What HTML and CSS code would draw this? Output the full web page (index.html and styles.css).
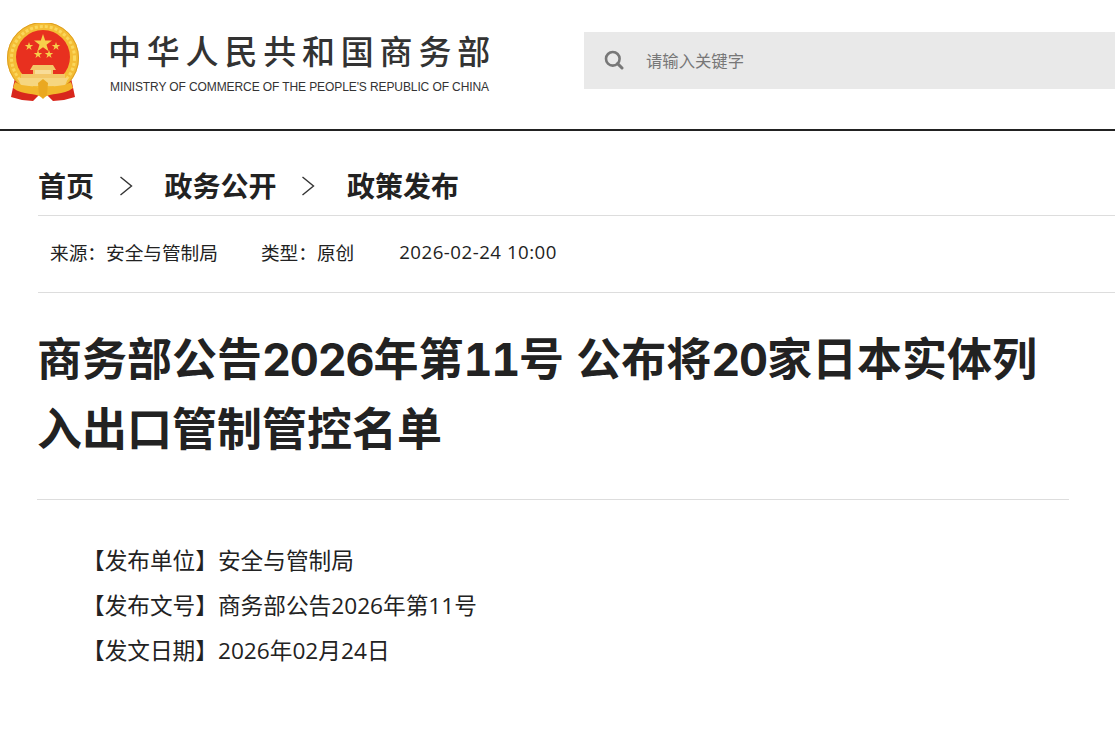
FILE: index.html
```html
<!DOCTYPE html>
<html lang="zh-CN">
<head>
  <meta charset="UTF-8" />
  <meta name="viewport" content="width=device-width, initial-scale=1.0"/>
  <title>商务部公告2026年第11号</title>
  <link rel="stylesheet" href="styles.css">
</head>
<body>
  <header class="top">
    <div class="brand">
      <svg class="emblem" width="76" height="80" viewBox="0 0 76 80">
        <path d="M11 50 L6 74 L17 77 L28 78 L34 72 L42 72 L48 78 L59 77 L70 74 L65 50 Z" fill="#d8261c"/>
        <circle cx="38" cy="35" r="36" fill="#f4bd35"/>
        <circle cx="38" cy="35" r="31.5" fill="none" stroke="#fbd75c" stroke-width="3" stroke-dasharray="3 2"/>
        <circle cx="38" cy="35" r="35.5" fill="none" stroke="#dd9d20" stroke-width="1"/>
        <circle cx="38" cy="34" r="27" fill="#e8301f"/>
        <polygon points="38,11 40.2,17.6 47,17.6 41.5,21.7 43.6,28.3 38,24.2 32.4,28.3 34.5,21.7 29,17.6 35.8,17.6" fill="#f7cf4a"/>
        <polygon points="24,19 25,22 28.2,22 25.6,23.9 26.6,27 24,25.1 21.4,27 22.4,23.9 19.8,22 23,22" fill="#f7cf4a"/>
        <polygon points="51,19 52,22 55.2,22 52.6,23.9 53.6,27 51,25.1 48.4,27 49.4,23.9 46.8,22 50,22" fill="#f7cf4a"/>
        <polygon points="33,27 34,30 37.2,30 34.6,31.9 35.6,35 33,33.1 30.4,35 31.4,31.9 28.8,30 32,30" fill="#f7cf4a"/>
        <polygon points="44,27 45,30 48.2,30 45.6,31.9 46.6,35 44,33.1 41.4,35 42.4,31.9 39.8,30 43,30" fill="#f7cf4a"/>
        <path d="M28 42 H48 L51 47 H48 V51 H60 V55 H16 V51 H28 V47 H25 Z" fill="#f3c768"/>
        <path d="M30 47 H46 V51 H30 Z" fill="#f8dc98"/>
        <path d="M13 55 H63 L60 63 H16 Z" fill="#f6d680"/>
        <path d="M10 59 C18 65 30 61 38 67 C46 61 58 65 66 59 L68 65 C58 73 46 69 38 75 C30 69 18 73 8 65 Z" fill="#f2b62c"/>
        <path d="M33 60 L38 56 L43 60 L42 72 L38 76 L34 72 Z" fill="#eaa821"/>
      </svg>
      <div class="brand-text">
        <div class="brand-cn">中华人民共和国商务部</div>
        <div class="brand-en">MINISTRY OF COMMERCE OF THE PEOPLE'S REPUBLIC OF CHINA</div>
      </div>
    </div>
    <div class="search">
      <svg class="search-icon" width="20" height="20" viewBox="0 0 20 20">
        <circle cx="8.8" cy="8.8" r="6.8" fill="none" stroke="#777" stroke-width="2.6"/>
        <path d="M13.6 13.6 L18 18" stroke="#777" stroke-width="3" stroke-linecap="round"/>
      </svg>
      <span class="search-hint">请输入关键字</span>
    </div>
  </header>

  <main class="main">
    <nav class="crumbs">
      <a>首页</a>
      <svg class="sep" width="14" height="20" viewBox="0 0 14 20"><path d="M1.5 1 L12.5 10 L1.5 19" fill="none" stroke="#333" stroke-width="1.4"/></svg>
      <a>政务公开</a>
      <svg class="sep" width="14" height="20" viewBox="0 0 14 20"><path d="M1.5 1 L12.5 10 L1.5 19" fill="none" stroke="#333" stroke-width="1.4"/></svg>
      <a>政策发布</a>
    </nav>
    <div class="meta">
      <span>来源：安全与管制局</span>
      <span>类型：原创</span>
      <span class="meta-date">2026-02-24 10:00</span>
    </div>
    <div class="article">
      <h1 class="title">商务部公告<span class="num">2026</span>年第<span class="num">11</span>号 公布将<span class="num">20</span>家日本实体列<br>入出口管制管控名单</h1>
      <div class="info">
        <p>【发布单位】安全与管制局</p>
        <p>【发布文号】商务部公告2026年第11号</p>
        <p>【发文日期】2026年02月24日</p>
      </div>
    </div>
  </main>
</body>
</html>
```

FILE: styles.css
```css
* { box-sizing: border-box; }
body {
  margin: 0; background: #fff; color: #222;
  font-family: "Open Sans", "Noto Sans CJK SC", sans-serif;
  overflow-x: hidden;
}
.top {
  display: flex; height: 131px; border-bottom: 2px solid #222;
}
.brand { display: flex; width: 584px; padding: 23px 0 0 5px; }
.emblem { flex: none; }
.brand-text { margin: 9px 0 0 27px; }
.brand-cn {
  font-size: 33px; line-height: 40px; letter-spacing: 5.8px; color: #333; font-weight: 500;
  white-space: nowrap;
}
.brand-en {
  margin: 7px 0 0 2px; font: 12px/16px "Liberation Sans", sans-serif; color: #333;
  white-space: nowrap; letter-spacing: -0.1px;
}
.search {
  display: flex; align-items: center; flex: 1;
  height: 57px; margin-top: 32px; padding: 0 0 1px 20px; background: #e9e9e9;
}
.search-hint { margin-left: 22px; font-size: 16.33px; color: #777; }
.main { padding: 0 0 0 38px; }
.crumbs {
  display: flex; align-items: center; height: 85px; padding-top: 23px;
  border-bottom: 1px solid #ddd;
  font-size: 28px; font-weight: 700; color: #222;
}
.sep { margin: 2px 32px 0 24.5px; flex: none; }
.meta {
  display: flex; gap: 43px; align-items: center; height: 77px;
  padding: 0 0 6px 12px; border-bottom: 1px solid #ddd;
  font-size: 18.67px;
}
.meta-date { margin-left: 2px; letter-spacing: 0.5px; }
.article { width: 1031px; }
.title {
  margin: 0 0 0 -1px; padding: 32px 0 34px; border-bottom: 1px solid #ddd;
  font-family: Inter, "Noto Sans CJK SC", sans-serif; font-variant-numeric: tabular-nums;
  font-size: 45px; line-height: 70px; font-weight: 700; color: #222;
}
.title .num { letter-spacing: -1.25px; }
.info { padding-top: 38px; font-size: 22.67px; line-height: 45px; color: #222; }
.info p { margin: 0; padding-left: 44px; }
```
